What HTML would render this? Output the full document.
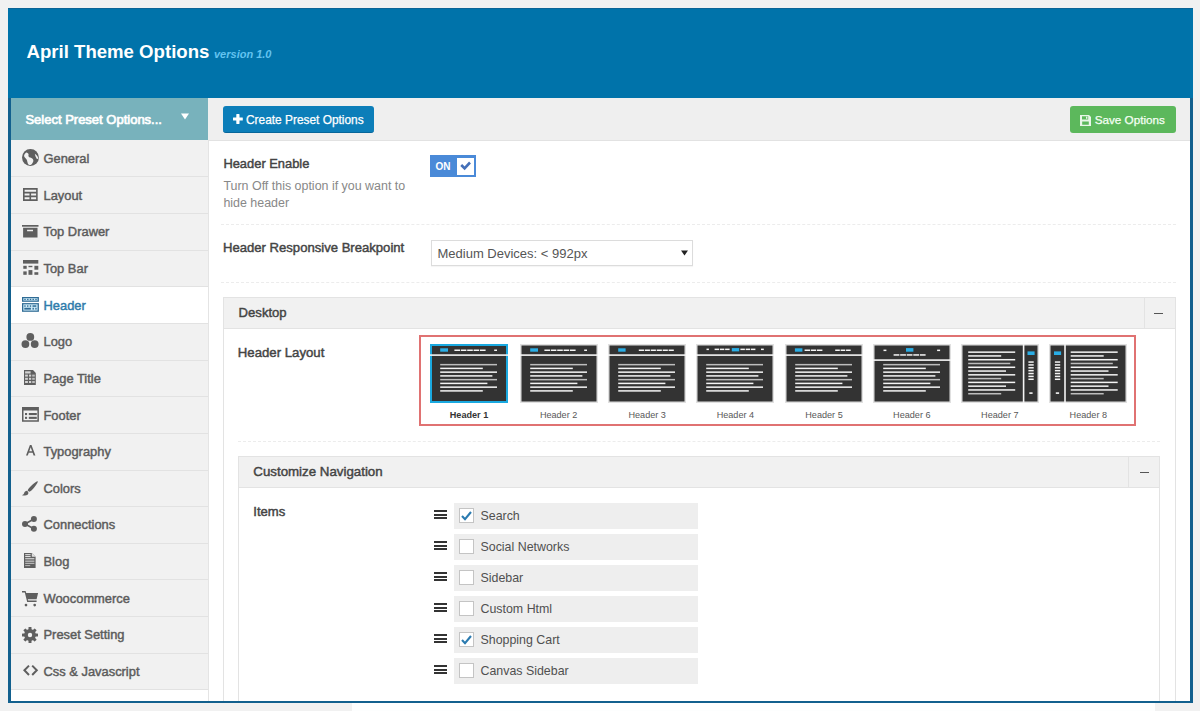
<!DOCTYPE html>
<html><head><meta charset="utf-8"><style>
*{box-sizing:border-box;margin:0;padding:0}
html,body{width:1200px;height:711px;overflow:hidden;background:#f1f1f1;font-family:"Liberation Sans",sans-serif;position:relative}
.t{position:absolute;white-space:nowrap;line-height:1}
.r{position:absolute}
svg{position:absolute;overflow:visible}
</style></head><body>
<div class="r" style="left:8px;top:8px;width:1185px;height:695px;background:#fff;border:3px solid #12608e;border-top:0;border-bottom-width:2px"></div>
<div class="r" style="left:8px;top:8px;width:1185px;height:90px;background:#0073aa;"></div>
<div class="r" style="left:8px;top:7.5px;width:1185px;height:1px;background:#0b6496;"></div>
<div class="r" style="left:352px;top:703px;width:803px;height:8px;background:#fdfefe;"></div>
<div class="t" style="left:26.5px;top:43.06px;font-size:18.6px;font-weight:bold;color:#fff;">April Theme Options</div>
<div class="t" style="left:214px;top:49.09px;font-size:11px;font-weight:bold;color:#63c3f0;font-style:italic">version 1.0</div>
<div class="r" style="left:11px;top:98px;width:197px;height:592px;background:#f1f1f1;"></div>
<div class="r" style="left:11px;top:98px;width:197px;height:41.5px;background:#78b2bc;"></div>
<div class="t" style="left:25.4px;top:113.20px;font-size:13px;font-weight:normal;color:#fff;-webkit-text-stroke:0.7px #fff">Select Preset Options...</div>
<svg style="left:180px;top:113px" width="10" height="7"><path d="M1 0.5 H9 L5 6.5 Z" fill="#fff"/></svg>
<div class="r" style="left:11px;top:176.30px;width:197px;height:1px;background:#e2e2e2;"></div>
<div class="t" style="left:43.5px;top:152.98px;font-size:12.9px;font-weight:normal;color:#5c5c5c;-webkit-text-stroke:0.45px #5c5c5c">General</div>
<svg style="left:21.8px;top:148.8px" width="17" height="17" viewBox="0 0 17 17"><circle cx="8.45" cy="8.45" r="8.45" fill="#5f5f5f"/><path d="M4.2 3.6 C5.4 3.8 6.6 4.6 6.6 5.6 C6.4 6.8 6.2 7.6 7.2 8.2 C8.4 8.6 9.6 8.6 10.6 9.8 C11.6 11 11.6 12.4 10.8 13.6 C10.2 14.6 9.8 15.6 8.6 16 C7.6 16.2 6.4 15.6 5.8 14.4 C5.2 13.2 5.4 11.8 4.6 10.6 C4 9.6 2.6 8.8 2.2 7.6 C1.8 6.2 2.6 4.8 4.2 3.6 Z" fill="#f1f1f1"/><path d="M12.8 4.8 C14.2 5.6 15.6 7.2 16.4 9 C16 9.8 15.6 10.2 15 10 C14.2 9.2 13.4 7.6 12.8 4.8 Z" fill="#f1f1f1"/></svg>
<div class="r" style="left:11px;top:212.95px;width:197px;height:1px;background:#e2e2e2;"></div>
<div class="t" style="left:43.5px;top:189.63px;font-size:12.9px;font-weight:normal;color:#5c5c5c;-webkit-text-stroke:0.45px #5c5c5c">Layout</div>
<svg style="left:22.6px;top:188.1px" width="15" height="13.2" viewBox="0 0 15 13.2"><path d="M0 0H14.7V13.1H0Z M1.6 1.8V3.8H13.1V1.8Z M1.6 5.5V7.5H6.5V5.5Z M8.1 5.5V7.5H13.1V5.5Z M1.6 9.2V11.3H6.5V9.2Z M8.1 9.2V11.3H13.1V9.2Z" fill="#5f5f5f" fill-rule="evenodd"/></svg>
<div class="r" style="left:11px;top:249.60px;width:197px;height:1px;background:#e2e2e2;"></div>
<div class="t" style="left:43.5px;top:226.28px;font-size:12.9px;font-weight:normal;color:#5c5c5c;-webkit-text-stroke:0.45px #5c5c5c">Top Drawer</div>
<svg style="left:21.8px;top:225.2px" width="17" height="13" viewBox="0 0 17 13"><rect x="0" y="0" width="16.5" height="1.7" fill="#5f5f5f"/><path d="M1.1 2.8H15.5V12.4H1.1Z M5.1 4.8V6.2H11V4.8Z" fill="#5f5f5f" fill-rule="evenodd"/></svg>
<div class="r" style="left:11px;top:286.25px;width:197px;height:1px;background:#e2e2e2;"></div>
<div class="t" style="left:43.5px;top:262.93px;font-size:12.9px;font-weight:normal;color:#5c5c5c;-webkit-text-stroke:0.45px #5c5c5c">Top Bar</div>
<svg style="left:22.6px;top:260.2px" width="16" height="15" viewBox="0 0 16 15"><rect x="0" y="0" width="15.3" height="3.6" fill="#5f5f5f"/><rect x="0.3" y="5.8" width="3.4" height="3" fill="#5f5f5f"/><rect x="5.5" y="5.8" width="3.9" height="1.4" fill="#5f5f5f"/><rect x="11.4" y="5.8" width="3.9" height="3.9" fill="#5f5f5f"/><rect x="0.3" y="11.4" width="3.4" height="3.4" fill="#5f5f5f"/><rect x="5.5" y="10.1" width="3.9" height="4.7" fill="#5f5f5f"/><rect x="11.4" y="12.2" width="3.9" height="2.6" fill="#5f5f5f"/></svg>
<div class="r" style="left:11px;top:287.25px;width:197.5px;height:35.65px;background:#fff;"></div>
<div class="r" style="left:11px;top:322.90px;width:197px;height:1px;background:#e2e2e2;"></div>
<div class="t" style="left:43.5px;top:299.58px;font-size:12.9px;font-weight:normal;color:#2f7cab;-webkit-text-stroke:0.45px #2f7cab">Header</div>
<svg style="left:22.4px;top:297px" width="17" height="15" viewBox="0 0 17 15"><rect x="0" y="0" width="16.9" height="4.8" fill="#2f6b95"/><rect x="1.3" y="1.2" width="14.3" height="2.4" fill="#cdeaf7"/><rect x="0" y="6.1" width="16.9" height="8.7" fill="#2f6b95"/><rect x="1.3" y="7.3" width="14.3" height="6.3" fill="#cdeaf7"/><rect x="2.3" y="1.8" width="1.4" height="1.3" fill="#2f6b95"/><rect x="5.1" y="1.8" width="1.4" height="1.3" fill="#2f6b95"/><rect x="7.8" y="1.8" width="1.4" height="1.3" fill="#2f6b95"/><rect x="10.5" y="1.8" width="1.4" height="1.3" fill="#2f6b95"/><rect x="13.3" y="1.8" width="1.4" height="1.3" fill="#2f6b95"/><rect x="2.3" y="8.3" width="1.3" height="1.5" fill="#2f6b95"/><rect x="5.1" y="8.3" width="1.3" height="1.5" fill="#2f6b95"/><rect x="7.8" y="8.3" width="1.3" height="1.5" fill="#2f6b95"/><rect x="10.5" y="8.3" width="3.8" height="1.5" fill="#2f6b95"/><rect x="2.3" y="10.8" width="6.6" height="1.8" fill="#2f6b95"/><rect x="10.5" y="10.8" width="1.4" height="1.8" fill="#2f6b95"/><rect x="13.3" y="10.8" width="1.3" height="1.8" fill="#2f6b95"/></svg>
<div class="r" style="left:11px;top:359.55px;width:197px;height:1px;background:#e2e2e2;"></div>
<div class="t" style="left:43.5px;top:336.23px;font-size:12.9px;font-weight:normal;color:#5c5c5c;-webkit-text-stroke:0.45px #5c5c5c">Logo</div>
<svg style="left:21px;top:333px" width="18" height="16" viewBox="0 0 18 16"><circle cx="9.3" cy="3.9" r="3.9" fill="#5f5f5f"/><circle cx="4.4" cy="11.1" r="3.9" fill="#5f5f5f"/><circle cx="13.7" cy="11.1" r="3.9" fill="#5f5f5f"/></svg>
<div class="r" style="left:11px;top:396.20px;width:197px;height:1px;background:#e2e2e2;"></div>
<div class="t" style="left:43.5px;top:372.88px;font-size:12.9px;font-weight:normal;color:#5c5c5c;-webkit-text-stroke:0.45px #5c5c5c">Page Title</div>
<svg style="left:24.1px;top:370px" width="12" height="15" viewBox="0 0 12 15"><path d="M0 0H9L11.8 3V14.9H0Z" fill="#5f5f5f"/><rect x="1.1" y="1.3" width="5.5" height="2.2" fill="#d4d4d4"/><rect x="1.1" y="4.6" width="2.8" height="2" fill="#d4d4d4"/><rect x="5.0" y="4.6" width="2.2" height="2" fill="#d4d4d4"/><rect x="8.2" y="4.6" width="2.6" height="2" fill="#bdbdbd"/><rect x="1.1" y="7.8" width="2.8" height="2" fill="#d4d4d4"/><rect x="5.0" y="7.8" width="2.2" height="2" fill="#d4d4d4"/><rect x="8.2" y="7.8" width="2.6" height="2" fill="#bdbdbd"/><rect x="1.1" y="11.0" width="2.8" height="2" fill="#d4d4d4"/><rect x="5.0" y="11.0" width="2.2" height="2" fill="#d4d4d4"/><rect x="8.2" y="11.0" width="2.6" height="2" fill="#bdbdbd"/></svg>
<div class="r" style="left:11px;top:432.85px;width:197px;height:1px;background:#e2e2e2;"></div>
<div class="t" style="left:43.5px;top:409.53px;font-size:12.9px;font-weight:normal;color:#5c5c5c;-webkit-text-stroke:0.45px #5c5c5c">Footer</div>
<svg style="left:21.8px;top:406.8px" width="17" height="15" viewBox="0 0 17 15"><path d="M0 0H16.9V14.8H0Z M1.5 3.4V13.3H15.4V3.4Z" fill="#5f5f5f" fill-rule="evenodd"/><rect x="3" y="6" width="2.1" height="2.1" fill="#5f5f5f"/><rect x="6.8" y="6" width="8" height="2.1" fill="#5f5f5f"/><rect x="3" y="9.8" width="2.1" height="2.1" fill="#5f5f5f"/><rect x="6.8" y="9.8" width="8" height="2.1" fill="#5f5f5f"/></svg>
<div class="r" style="left:11px;top:469.50px;width:197px;height:1px;background:#e2e2e2;"></div>
<div class="t" style="left:43.5px;top:446.18px;font-size:12.9px;font-weight:normal;color:#5c5c5c;-webkit-text-stroke:0.45px #5c5c5c">Typography</div>
<svg style="left:25.6px;top:445px" width="10" height="11" viewBox="0 0 10 11"><path d="M0 10.6 L3.9 0 H5.5 L9.4 10.6 H7.6 L6.6 7.8 H2.8 L1.8 10.6 Z M3.3 6.3 H6.1 L4.7 2.3 Z" fill="#5f5f5f" fill-rule="evenodd"/></svg>
<div class="r" style="left:11px;top:506.15px;width:197px;height:1px;background:#e2e2e2;"></div>
<div class="t" style="left:43.5px;top:482.83px;font-size:12.9px;font-weight:normal;color:#5c5c5c;-webkit-text-stroke:0.45px #5c5c5c">Colors</div>
<svg style="left:22.2px;top:480.6px" width="16" height="15" viewBox="0 0 16 15"><path d="M15.7 0.2 C16.2 0.8 14.6 3.4 12.4 6.2 C10.8 8.2 8.6 10.4 7.2 10.8 L5.6 9.4 C6.2 7.8 8.6 5.4 10.6 3.6 C13 1.4 15.2 -0.2 15.7 0.2 Z" fill="#5f5f5f"/><path d="M5 9.8 C3.4 9.8 2.6 10.8 2.2 12 C1.8 13.2 1 13.8 0 14.2 C1.8 14.7 4.4 14.6 5.8 13.4 C6.6 12.6 6.8 11.2 5 9.8 Z" fill="#5f5f5f"/></svg>
<div class="r" style="left:11px;top:542.80px;width:197px;height:1px;background:#e2e2e2;"></div>
<div class="t" style="left:43.5px;top:519.48px;font-size:12.9px;font-weight:normal;color:#5c5c5c;-webkit-text-stroke:0.45px #5c5c5c">Connections</div>
<svg style="left:22.2px;top:515.9px" width="16" height="16" viewBox="0 0 16 16"><circle cx="11.9" cy="3" r="3" fill="#5f5f5f"/><circle cx="3" cy="8.1" r="3" fill="#5f5f5f"/><circle cx="11.9" cy="12.7" r="3" fill="#5f5f5f"/><path d="M3 8.1 L11.9 3 M3 8.1 L11.9 12.7" stroke="#5f5f5f" stroke-width="1.7"/></svg>
<div class="r" style="left:11px;top:579.45px;width:197px;height:1px;background:#e2e2e2;"></div>
<div class="t" style="left:43.5px;top:556.13px;font-size:12.9px;font-weight:normal;color:#5c5c5c;-webkit-text-stroke:0.45px #5c5c5c">Blog</div>
<svg style="left:24.3px;top:553.1px" width="12" height="16" viewBox="0 0 12 16"><path d="M0 0H7.8L11.6 3.8V15.1H0Z" fill="#5f5f5f"/><path d="M7.8 0V3.8H11.6Z" fill="#e0e0e0"/><rect x="1.2" y="1.1" width="5.4" height="1.1" fill="#e0e0e0"/><rect x="1.2" y="3.0" width="5.4" height="1.1" fill="#e0e0e0"/><rect x="1.2" y="5.2" width="9.2" height="1.1" fill="#e0e0e0"/><rect x="1.2" y="7.6" width="9.2" height="1.1" fill="#d0d0d0"/><rect x="1.2" y="9.8" width="9.2" height="1.1" fill="#c0c0c0"/><rect x="1.2" y="12" width="5" height="1.1" fill="#b0b0b0"/></svg>
<div class="r" style="left:11px;top:616.10px;width:197px;height:1px;background:#e2e2e2;"></div>
<div class="t" style="left:43.5px;top:592.78px;font-size:12.9px;font-weight:normal;color:#5c5c5c;-webkit-text-stroke:0.45px #5c5c5c">Woocommerce</div>
<svg style="left:21.8px;top:590.5px" width="17" height="16" viewBox="0 0 17 16"><path d="M0 0 H3.6 L4.2 2.1 H16.1 L14.6 8.2 H5.8 L6.2 9.6 H14.6 V11 H5.2 L2.8 1.4 H0 Z" fill="#5f5f5f"/><circle cx="4" cy="14.1" r="1.35" fill="#5f5f5f"/><circle cx="12.7" cy="14.1" r="1.35" fill="#5f5f5f"/></svg>
<div class="r" style="left:11px;top:652.75px;width:197px;height:1px;background:#e2e2e2;"></div>
<div class="t" style="left:43.5px;top:629.43px;font-size:12.9px;font-weight:normal;color:#5c5c5c;-webkit-text-stroke:0.45px #5c5c5c">Preset Setting</div>
<svg style="left:21.8px;top:626.5px" width="16" height="16" viewBox="-8 -8 16 16"><g fill="#5f5f5f"><rect x="-1.5" y="-8" width="3" height="4" rx="0.5" transform="rotate(0)"/><rect x="-1.5" y="-8" width="3" height="4" rx="0.5" transform="rotate(45)"/><rect x="-1.5" y="-8" width="3" height="4" rx="0.5" transform="rotate(90)"/><rect x="-1.5" y="-8" width="3" height="4" rx="0.5" transform="rotate(135)"/><rect x="-1.5" y="-8" width="3" height="4" rx="0.5" transform="rotate(180)"/><rect x="-1.5" y="-8" width="3" height="4" rx="0.5" transform="rotate(225)"/><rect x="-1.5" y="-8" width="3" height="4" rx="0.5" transform="rotate(270)"/><rect x="-1.5" y="-8" width="3" height="4" rx="0.5" transform="rotate(315)"/><circle r="5.9"/></g><circle r="2.2" fill="#f1f1f1"/></svg>
<div class="r" style="left:11px;top:689.40px;width:197px;height:1px;background:#e2e2e2;"></div>
<div class="t" style="left:43.5px;top:666.08px;font-size:12.9px;font-weight:normal;color:#5c5c5c;-webkit-text-stroke:0.45px #5c5c5c">Css &amp; Javascript</div>
<svg style="left:22.5px;top:665px" width="16" height="11" viewBox="0 0 16 11"><path d="M6 0.6 L1.4 5.3 L6 10 M9.2 0.6 L13.8 5.3 L9.2 10" stroke="#5f5f5f" stroke-width="2" fill="none" stroke-linejoin="miter"/></svg>
<div class="r" style="left:207.5px;top:139.5px;width:1px;height:561.5px;background:#e4e4e4;"></div>
<div class="r" style="left:208px;top:98px;width:982px;height:42.5px;background:#efefef;border-bottom:1px solid #e2e2e2"></div>
<div class="r" style="left:223px;top:106px;width:151px;height:26.7px;background:#0c7eb9;border-radius:3px;border-bottom:1px solid #07669a"></div>
<svg style="left:233px;top:114.3px" width="10" height="10" viewBox="0 0 10 10"><path d="M3.3 0.4Q3.3 0 3.7 0H6.1Q6.5 0 6.5 0.4V3.4H9.4Q9.8 3.4 9.8 3.8V6.2Q9.8 6.6 9.4 6.6H6.5V9.6Q6.5 10 6.1 10H3.7Q3.3 10 3.3 9.6V6.6H0.4Q0 6.6 0 6.2V3.8Q0 3.4 0.4 3.4H3.3Z" fill="#fff"/></svg>
<div class="t" style="left:246px;top:114.83px;font-size:11.9px;font-weight:normal;color:#fff;-webkit-text-stroke:0.25px #fff">Create Preset Options</div>
<div class="r" style="left:1070px;top:106px;width:106px;height:26.5px;background:#5cb85c;border-radius:3px"></div>
<svg style="left:1080px;top:114.5px" width="11" height="11" viewBox="0 0 11 11"><path d="M0 0H9L11 2V11H0Z M2 1.2V4.4H8.2V1.2Z M2.2 6.4V9.8H8.8V6.4Z" fill="#e8f6e8" fill-rule="evenodd"/><rect x="6" y="1.6" width="1.4" height="2.2" fill="#e8f6e8"/></svg>
<div class="t" style="left:1094.7px;top:114.40px;font-size:11.7px;font-weight:normal;color:#f4fff4;-webkit-text-stroke:0.25px #f4fff4">Save Options</div>
<div class="t" style="left:223.4px;top:157.78px;font-size:12.9px;font-weight:normal;color:#444;-webkit-text-stroke:0.45px #444">Header Enable</div>
<div class="t" style="left:223.4px;top:179.76px;font-size:12.45px;font-weight:normal;color:#888;">Turn Off this option if you want to</div>
<div class="t" style="left:223.4px;top:196.66px;font-size:12.45px;font-weight:normal;color:#888;">hide header</div>
<div class="r" style="left:430px;top:155px;width:46px;height:22px;background:#4a8ad8;"></div>
<div class="r" style="left:456.5px;top:158px;width:17px;height:16.5px;background:#fff;"></div>
<div class="t" style="left:435.5px;top:161.53px;font-size:10px;font-weight:bold;color:#fff;">ON</div>
<svg style="left:459px;top:161px" width="12" height="10" viewBox="0 0 12 10"><path d="M2.2 4 L5.6 7.3 L11 1.5" stroke="#4570b8" stroke-width="2.6" fill="none"/></svg>
<div class="r" style="left:221px;top:224px;width:955px;height:1px;background:transparent;border-top:1px dashed #ececec"></div>
<div class="t" style="left:223px;top:241.01px;font-size:13.1px;font-weight:normal;color:#444;-webkit-text-stroke:0.45px #444">Header Responsive Breakpoint</div>
<div class="r" style="left:430.5px;top:240.3px;width:262.5px;height:26px;background:#fff;border:1px solid #dcdcdc;box-shadow:0 1px 1px rgba(0,0,0,.04)"></div>
<div class="t" style="left:437.5px;top:247.20px;font-size:13px;font-weight:normal;color:#555;">Medium Devices: &lt; 992px</div>
<svg style="left:681px;top:250px" width="7" height="6" viewBox="0 0 7 6"><path d="M0 0.5H7L3.5 5.5Z" fill="#222"/></svg>
<div class="r" style="left:221px;top:281.5px;width:955px;height:1px;background:transparent;border-top:1px dashed #ececec"></div>
<div class="r" style="left:223px;top:297px;width:953px;height:404px;background:#fff;border:1px solid #e3e3e3;border-bottom:0"></div>
<div class="r" style="left:223px;top:297px;width:953px;height:31.5px;background:#f1f1f1;border:1px solid #e3e3e3"></div>
<div class="r" style="left:1143.5px;top:297px;width:1px;height:31.5px;background:#e3e3e3;"></div>
<div class="r" style="left:1154px;top:312.5px;width:9px;height:1.6px;background:#555;"></div>
<div class="t" style="left:238.6px;top:306.31px;font-size:13.1px;font-weight:normal;color:#444;-webkit-text-stroke:0.45px #444">Desktop</div>
<div class="t" style="left:237.8px;top:346.23px;font-size:13.2px;font-weight:normal;color:#444;-webkit-text-stroke:0.45px #444">Header Layout</div>
<div class="r" style="left:419.2px;top:334.6px;width:716.8px;height:91.2px;background:transparent;border:2px solid #e07272"></div>
<svg style="left:430.0px;top:344.3px" width="78" height="59" viewBox="0 0 78 59"><rect x="0" y="0" width="78" height="59" fill="#1aa9e0"/><rect x="2" y="2" width="74" height="55" fill="#333"/><rect x="0" y="10.3" width="78" height="1.6" fill="#f4f4f4"/><rect x="10.2" y="19.90" width="56.80" height="1.5" fill="#bdbdbd"/><rect x="10.2" y="23.65" width="42.60" height="1.5" fill="#f4f4f4"/><rect x="10.2" y="27.40" width="56.80" height="1.5" fill="#f4f4f4"/><rect x="10.2" y="31.15" width="52.20" height="1.5" fill="#f4f4f4"/><rect x="10.2" y="34.90" width="56.80" height="1.5" fill="#bdbdbd"/><rect x="10.2" y="38.65" width="47.20" height="1.5" fill="#f4f4f4"/><rect x="10.2" y="42.40" width="56.80" height="1.5" fill="#f4f4f4"/><rect x="10.2" y="46.15" width="42.60" height="1.5" fill="#f4f4f4"/><rect x="10.2" y="4.3" width="7.8" height="3.4" fill="#2aaee6"/><rect x="24.40" y="5.5" width="5.60" height="1.5" fill="#f4f4f4"/><rect x="30.80" y="5.5" width="5.60" height="1.5" fill="#f4f4f4"/><rect x="37.20" y="5.5" width="5.60" height="1.5" fill="#f4f4f4"/><rect x="43.60" y="5.5" width="5.60" height="1.5" fill="#f4f4f4"/><rect x="50.00" y="5.5" width="5.60" height="1.5" fill="#f4f4f4"/><rect x="64.2" y="5.5" width="2.8" height="1.5" fill="#f4f4f4"/></svg>
<div class="t" style="left:429px;width:80px;text-align:center;top:411.10px;font-size:9.1px;font-weight:bold;color:#333">Header 1</div>
<svg style="left:519.6px;top:344.3px" width="78" height="59" viewBox="0 0 78 59"><rect x="0" y="0" width="78" height="59" fill="#e0e0e0"/><rect x="1.5" y="1.5" width="75" height="56" fill="#333"/><rect x="0" y="10.3" width="78" height="1.6" fill="#f4f4f4"/><rect x="10.2" y="19.90" width="56.80" height="1.5" fill="#bdbdbd"/><rect x="10.2" y="23.65" width="42.60" height="1.5" fill="#f4f4f4"/><rect x="10.2" y="27.40" width="56.80" height="1.5" fill="#f4f4f4"/><rect x="10.2" y="31.15" width="52.20" height="1.5" fill="#f4f4f4"/><rect x="10.2" y="34.90" width="56.80" height="1.5" fill="#bdbdbd"/><rect x="10.2" y="38.65" width="47.20" height="1.5" fill="#f4f4f4"/><rect x="10.2" y="42.40" width="56.80" height="1.5" fill="#f4f4f4"/><rect x="10.2" y="46.15" width="42.60" height="1.5" fill="#f4f4f4"/><rect x="10.2" y="4.3" width="7.8" height="3.4" fill="#2aaee6"/><rect x="24.40" y="5.5" width="5.60" height="1.5" fill="#f4f4f4"/><rect x="30.80" y="5.5" width="5.60" height="1.5" fill="#f4f4f4"/><rect x="37.20" y="5.5" width="5.60" height="1.5" fill="#f4f4f4"/><rect x="43.60" y="5.5" width="5.60" height="1.5" fill="#f4f4f4"/><rect x="50.00" y="5.5" width="5.60" height="1.5" fill="#f4f4f4"/><rect x="64.2" y="5.5" width="2.8" height="1.5" fill="#f4f4f4"/></svg>
<div class="t" style="left:518.6px;width:80px;text-align:center;top:411.18px;font-size:9.1px;color:#585858">Header 2</div>
<svg style="left:608.2px;top:344.3px" width="78" height="59" viewBox="0 0 78 59"><rect x="0" y="0" width="78" height="59" fill="#e0e0e0"/><rect x="1.5" y="1.5" width="75" height="56" fill="#333"/><rect x="0" y="10.3" width="78" height="1.6" fill="#f4f4f4"/><rect x="10.2" y="19.90" width="56.80" height="1.5" fill="#bdbdbd"/><rect x="10.2" y="23.65" width="42.60" height="1.5" fill="#f4f4f4"/><rect x="10.2" y="27.40" width="56.80" height="1.5" fill="#f4f4f4"/><rect x="10.2" y="31.15" width="52.20" height="1.5" fill="#f4f4f4"/><rect x="10.2" y="34.90" width="56.80" height="1.5" fill="#bdbdbd"/><rect x="10.2" y="38.65" width="47.20" height="1.5" fill="#f4f4f4"/><rect x="10.2" y="42.40" width="56.80" height="1.5" fill="#f4f4f4"/><rect x="10.2" y="46.15" width="42.60" height="1.5" fill="#f4f4f4"/><rect x="10.2" y="4.3" width="7.4" height="3.4" fill="#2aaee6"/><rect x="30.80" y="5.5" width="5.17" height="1.5" fill="#f4f4f4"/><rect x="36.77" y="5.5" width="5.17" height="1.5" fill="#f4f4f4"/><rect x="42.73" y="5.5" width="5.17" height="1.5" fill="#f4f4f4"/><rect x="48.70" y="5.5" width="5.17" height="1.5" fill="#f4f4f4"/><rect x="54.67" y="5.5" width="5.17" height="1.5" fill="#f4f4f4"/><rect x="60.63" y="5.5" width="5.17" height="1.5" fill="#f4f4f4"/></svg>
<div class="t" style="left:607.2px;width:80px;text-align:center;top:411.18px;font-size:9.1px;color:#585858">Header 3</div>
<svg style="left:696.4px;top:344.3px" width="78" height="59" viewBox="0 0 78 59"><rect x="0" y="0" width="78" height="59" fill="#e0e0e0"/><rect x="1.5" y="1.5" width="75" height="56" fill="#333"/><rect x="0" y="10.3" width="78" height="1.6" fill="#f4f4f4"/><rect x="10.2" y="19.90" width="56.80" height="1.5" fill="#bdbdbd"/><rect x="10.2" y="23.65" width="42.60" height="1.5" fill="#f4f4f4"/><rect x="10.2" y="27.40" width="56.80" height="1.5" fill="#f4f4f4"/><rect x="10.2" y="31.15" width="52.20" height="1.5" fill="#f4f4f4"/><rect x="10.2" y="34.90" width="56.80" height="1.5" fill="#bdbdbd"/><rect x="10.2" y="38.65" width="47.20" height="1.5" fill="#f4f4f4"/><rect x="10.2" y="42.40" width="56.80" height="1.5" fill="#f4f4f4"/><rect x="10.2" y="46.15" width="42.60" height="1.5" fill="#f4f4f4"/><rect x="10.5" y="4.6" width="2.4" height="1.5" fill="#f4f4f4"/><rect x="18.60" y="4.6" width="4.47" height="1.5" fill="#f4f4f4"/><rect x="23.87" y="4.6" width="4.47" height="1.5" fill="#f4f4f4"/><rect x="29.13" y="4.6" width="4.47" height="1.5" fill="#f4f4f4"/><rect x="35.8" y="4.1" width="7.4" height="3.3" fill="#2aaee6"/><rect x="44.40" y="4.6" width="4.47" height="1.5" fill="#f4f4f4"/><rect x="49.67" y="4.6" width="4.47" height="1.5" fill="#f4f4f4"/><rect x="54.93" y="4.6" width="4.47" height="1.5" fill="#f4f4f4"/><rect x="65" y="4.6" width="2.8" height="1.5" fill="#f4f4f4"/></svg>
<div class="t" style="left:695.4px;width:80px;text-align:center;top:411.18px;font-size:9.1px;color:#585858">Header 4</div>
<svg style="left:785.0px;top:344.3px" width="78" height="59" viewBox="0 0 78 59"><rect x="0" y="0" width="78" height="59" fill="#e0e0e0"/><rect x="1.5" y="1.5" width="75" height="56" fill="#333"/><rect x="0" y="10.3" width="78" height="1.6" fill="#f4f4f4"/><rect x="10.2" y="19.90" width="56.80" height="1.5" fill="#bdbdbd"/><rect x="10.2" y="23.65" width="42.60" height="1.5" fill="#f4f4f4"/><rect x="10.2" y="27.40" width="56.80" height="1.5" fill="#f4f4f4"/><rect x="10.2" y="31.15" width="52.20" height="1.5" fill="#f4f4f4"/><rect x="10.2" y="34.90" width="56.80" height="1.5" fill="#bdbdbd"/><rect x="10.2" y="38.65" width="47.20" height="1.5" fill="#f4f4f4"/><rect x="10.2" y="42.40" width="56.80" height="1.5" fill="#f4f4f4"/><rect x="10.2" y="46.15" width="42.60" height="1.5" fill="#f4f4f4"/><rect x="9.9" y="4.3" width="7.5" height="3.4" fill="#2aaee6"/><rect x="19.60" y="5.5" width="5.40" height="1.5" fill="#f4f4f4"/><rect x="25.80" y="5.5" width="5.40" height="1.5" fill="#f4f4f4"/><rect x="32.00" y="5.5" width="5.40" height="1.5" fill="#f4f4f4"/><rect x="50.20" y="5.5" width="4.63" height="1.5" fill="#f4f4f4"/><rect x="55.63" y="5.5" width="4.63" height="1.5" fill="#f4f4f4"/><rect x="61.07" y="5.5" width="4.63" height="1.5" fill="#f4f4f4"/></svg>
<div class="t" style="left:784px;width:80px;text-align:center;top:411.18px;font-size:9.1px;color:#585858">Header 5</div>
<svg style="left:872.8px;top:344.3px" width="78" height="59" viewBox="0 0 78 59"><rect x="0" y="0" width="78" height="59" fill="#e0e0e0"/><rect x="1.5" y="1.5" width="75" height="56" fill="#333"/><rect x="0" y="15.3" width="78" height="1.6" fill="#f4f4f4"/><rect x="10.2" y="19.90" width="56.80" height="1.5" fill="#bdbdbd"/><rect x="10.2" y="23.65" width="42.60" height="1.5" fill="#f4f4f4"/><rect x="10.2" y="27.40" width="56.80" height="1.5" fill="#f4f4f4"/><rect x="10.2" y="31.15" width="52.20" height="1.5" fill="#f4f4f4"/><rect x="10.2" y="34.90" width="56.80" height="1.5" fill="#bdbdbd"/><rect x="10.2" y="38.65" width="47.20" height="1.5" fill="#f4f4f4"/><rect x="10.2" y="42.40" width="56.80" height="1.5" fill="#f4f4f4"/><rect x="10.2" y="46.15" width="42.60" height="1.5" fill="#f4f4f4"/><rect x="10.5" y="5.6" width="2.9" height="1.5" fill="#f4f4f4"/><rect x="33" y="4.1" width="7.4" height="3.6" fill="#2aaee6"/><rect x="64.1" y="5.6" width="3" height="1.5" fill="#f4f4f4"/><rect x="20.60" y="10.2" width="5.76" height="1.5" fill="#f4f4f4"/><rect x="27.16" y="10.2" width="5.76" height="1.5" fill="#f4f4f4"/><rect x="33.72" y="10.2" width="5.76" height="1.5" fill="#f4f4f4"/><rect x="40.28" y="10.2" width="5.76" height="1.5" fill="#f4f4f4"/><rect x="46.84" y="10.2" width="5.76" height="1.5" fill="#f4f4f4"/></svg>
<div class="t" style="left:871.8px;width:80px;text-align:center;top:411.18px;font-size:9.1px;color:#585858">Header 6</div>
<svg style="left:960.8px;top:344.3px" width="78" height="59" viewBox="0 0 78 59"><rect x="0" y="0" width="78" height="59" fill="#e0e0e0"/><rect x="1.5" y="1.5" width="75" height="56" fill="#333"/><rect x="61.800000000000004" y="0" width="1.6" height="59" fill="#f4f4f4"/><rect x="7.2" y="7.40" width="47.00" height="1.5" fill="#f4f4f4"/><rect x="7.2" y="11.18" width="33.00" height="1.5" fill="#f4f4f4"/><rect x="7.2" y="14.96" width="47.00" height="1.5" fill="#f4f4f4"/><rect x="7.2" y="18.74" width="42.10" height="1.5" fill="#bdbdbd"/><rect x="7.2" y="22.52" width="47.00" height="1.5" fill="#f4f4f4"/><rect x="7.2" y="26.30" width="37.80" height="1.5" fill="#f4f4f4"/><rect x="7.2" y="30.08" width="47.00" height="1.5" fill="#f4f4f4"/><rect x="7.2" y="33.86" width="33.00" height="1.5" fill="#bdbdbd"/><rect x="7.2" y="37.64" width="47.00" height="1.5" fill="#f4f4f4"/><rect x="7.2" y="41.42" width="37.80" height="1.5" fill="#f4f4f4"/><rect x="7.2" y="45.20" width="47.00" height="1.5" fill="#f4f4f4"/><rect x="7.2" y="48.98" width="33.00" height="1.5" fill="#bdbdbd"/><rect x="66.5" y="7.4" width="7.1" height="3.6" fill="#2aaee6"/><rect x="67.4" y="17.30" width="5.3" height="1.5" fill="#f4f4f4"/><rect x="67.4" y="20.17" width="5.3" height="1.5" fill="#f4f4f4"/><rect x="67.4" y="23.04" width="5.3" height="1.5" fill="#f4f4f4"/><rect x="67.4" y="25.91" width="5.3" height="1.5" fill="#f4f4f4"/><rect x="67.4" y="28.78" width="5.3" height="1.5" fill="#f4f4f4"/><rect x="67.4" y="31.65" width="5.3" height="1.5" fill="#f4f4f4"/><rect x="67.4" y="34.52" width="5.3" height="1.5" fill="#f4f4f4"/><rect x="68.3" y="48.3" width="3.3" height="1.6" fill="#f4f4f4"/></svg>
<div class="t" style="left:959.8px;width:80px;text-align:center;top:411.18px;font-size:9.1px;color:#585858">Header 7</div>
<svg style="left:1049.3px;top:344.3px" width="78" height="59" viewBox="0 0 78 59"><rect x="0" y="0" width="78" height="59" fill="#e0e0e0"/><rect x="1.5" y="1.5" width="75" height="56" fill="#333"/><rect x="15.2" y="0" width="1.6" height="59" fill="#f4f4f4"/><rect x="21.7" y="7.40" width="47.00" height="1.5" fill="#f4f4f4"/><rect x="21.7" y="11.18" width="33.00" height="1.5" fill="#f4f4f4"/><rect x="21.7" y="14.96" width="47.00" height="1.5" fill="#f4f4f4"/><rect x="21.7" y="18.74" width="42.10" height="1.5" fill="#bdbdbd"/><rect x="21.7" y="22.52" width="47.00" height="1.5" fill="#f4f4f4"/><rect x="21.7" y="26.30" width="37.80" height="1.5" fill="#f4f4f4"/><rect x="21.7" y="30.08" width="47.00" height="1.5" fill="#f4f4f4"/><rect x="21.7" y="33.86" width="33.00" height="1.5" fill="#bdbdbd"/><rect x="21.7" y="37.64" width="47.00" height="1.5" fill="#f4f4f4"/><rect x="21.7" y="41.42" width="37.80" height="1.5" fill="#f4f4f4"/><rect x="21.7" y="45.20" width="47.00" height="1.5" fill="#f4f4f4"/><rect x="21.7" y="48.98" width="33.00" height="1.5" fill="#bdbdbd"/><rect x="5" y="7.4" width="7.1" height="3.6" fill="#2aaee6"/><rect x="5.9" y="17.30" width="5.3" height="1.5" fill="#f4f4f4"/><rect x="5.9" y="20.17" width="5.3" height="1.5" fill="#f4f4f4"/><rect x="5.9" y="23.04" width="5.3" height="1.5" fill="#f4f4f4"/><rect x="5.9" y="25.91" width="5.3" height="1.5" fill="#f4f4f4"/><rect x="5.9" y="28.78" width="5.3" height="1.5" fill="#f4f4f4"/><rect x="5.9" y="31.65" width="5.3" height="1.5" fill="#f4f4f4"/><rect x="5.9" y="34.52" width="5.3" height="1.5" fill="#f4f4f4"/><rect x="6.8" y="48.3" width="3.3" height="1.6" fill="#f4f4f4"/></svg>
<div class="t" style="left:1048.3px;width:80px;text-align:center;top:411.18px;font-size:9.1px;color:#585858">Header 8</div>
<div class="r" style="left:238px;top:440.5px;width:922px;height:1px;background:transparent;border-top:1px dashed #ececec"></div>
<div class="r" style="left:238px;top:456px;width:922px;height:245px;background:#fff;border:1px solid #e3e3e3;border-bottom:0"></div>
<div class="r" style="left:238px;top:456px;width:922px;height:31.5px;background:#f1f1f1;border:1px solid #e3e3e3"></div>
<div class="r" style="left:1128px;top:456px;width:1px;height:31.5px;background:#e3e3e3;"></div>
<div class="r" style="left:1139.5px;top:471.5px;width:9px;height:1.6px;background:#555;"></div>
<div class="t" style="left:253.3px;top:464.54px;font-size:13.3px;font-weight:normal;color:#444;-webkit-text-stroke:0.45px #444">Customize Navigation</div>
<div class="t" style="left:253.3px;top:504.81px;font-size:13.1px;font-weight:normal;color:#444;-webkit-text-stroke:0.45px #444">Items</div>
<div class="r" style="left:454px;top:503px;width:244px;height:25.7px;background:#eeeeee;"></div>
<div class="r" style="left:434.2px;top:510.2px;width:13.2px;height:1.8px;background:#333;"></div>
<div class="r" style="left:434.2px;top:513.8px;width:13.2px;height:1.8px;background:#333;"></div>
<div class="r" style="left:434.2px;top:517.3px;width:13.2px;height:1.8px;background:#333;"></div>
<div class="r" style="left:458.7px;top:508px;width:15.2px;height:15px;background:#fff;border:1px solid #c4c4c4"></div>
<svg style="left:460px;top:510px" width="13" height="12" viewBox="0 0 13 12"><path d="M2 6 L5 9.2 L11 2" stroke="#2b7bb0" stroke-width="2.1" fill="none"/></svg>
<div class="t" style="left:480.5px;top:510.30px;font-size:12.4px;font-weight:normal;color:#505050;">Search</div>
<div class="r" style="left:454px;top:534px;width:244px;height:25.7px;background:#eeeeee;"></div>
<div class="r" style="left:434.2px;top:541.2px;width:13.2px;height:1.8px;background:#333;"></div>
<div class="r" style="left:434.2px;top:544.8px;width:13.2px;height:1.8px;background:#333;"></div>
<div class="r" style="left:434.2px;top:548.3px;width:13.2px;height:1.8px;background:#333;"></div>
<div class="r" style="left:458.7px;top:539px;width:15.2px;height:15px;background:#fff;border:1px solid #c4c4c4"></div>
<div class="t" style="left:480.5px;top:541.30px;font-size:12.4px;font-weight:normal;color:#505050;">Social Networks</div>
<div class="r" style="left:454px;top:565px;width:244px;height:25.7px;background:#eeeeee;"></div>
<div class="r" style="left:434.2px;top:572.2px;width:13.2px;height:1.8px;background:#333;"></div>
<div class="r" style="left:434.2px;top:575.8px;width:13.2px;height:1.8px;background:#333;"></div>
<div class="r" style="left:434.2px;top:579.3px;width:13.2px;height:1.8px;background:#333;"></div>
<div class="r" style="left:458.7px;top:570px;width:15.2px;height:15px;background:#fff;border:1px solid #c4c4c4"></div>
<div class="t" style="left:480.5px;top:572.30px;font-size:12.4px;font-weight:normal;color:#505050;">Sidebar</div>
<div class="r" style="left:454px;top:596px;width:244px;height:25.7px;background:#eeeeee;"></div>
<div class="r" style="left:434.2px;top:603.2px;width:13.2px;height:1.8px;background:#333;"></div>
<div class="r" style="left:434.2px;top:606.8px;width:13.2px;height:1.8px;background:#333;"></div>
<div class="r" style="left:434.2px;top:610.3px;width:13.2px;height:1.8px;background:#333;"></div>
<div class="r" style="left:458.7px;top:601px;width:15.2px;height:15px;background:#fff;border:1px solid #c4c4c4"></div>
<div class="t" style="left:480.5px;top:603.30px;font-size:12.4px;font-weight:normal;color:#505050;">Custom Html</div>
<div class="r" style="left:454px;top:627px;width:244px;height:25.7px;background:#eeeeee;"></div>
<div class="r" style="left:434.2px;top:634.2px;width:13.2px;height:1.8px;background:#333;"></div>
<div class="r" style="left:434.2px;top:637.8px;width:13.2px;height:1.8px;background:#333;"></div>
<div class="r" style="left:434.2px;top:641.3px;width:13.2px;height:1.8px;background:#333;"></div>
<div class="r" style="left:458.7px;top:632px;width:15.2px;height:15px;background:#fff;border:1px solid #c4c4c4"></div>
<svg style="left:460px;top:634px" width="13" height="12" viewBox="0 0 13 12"><path d="M2 6 L5 9.2 L11 2" stroke="#2b7bb0" stroke-width="2.1" fill="none"/></svg>
<div class="t" style="left:480.5px;top:634.30px;font-size:12.4px;font-weight:normal;color:#505050;">Shopping Cart</div>
<div class="r" style="left:454px;top:658px;width:244px;height:25.7px;background:#eeeeee;"></div>
<div class="r" style="left:434.2px;top:665.2px;width:13.2px;height:1.8px;background:#333;"></div>
<div class="r" style="left:434.2px;top:668.8px;width:13.2px;height:1.8px;background:#333;"></div>
<div class="r" style="left:434.2px;top:672.3px;width:13.2px;height:1.8px;background:#333;"></div>
<div class="r" style="left:458.7px;top:663px;width:15.2px;height:15px;background:#fff;border:1px solid #c4c4c4"></div>
<div class="t" style="left:480.5px;top:665.30px;font-size:12.4px;font-weight:normal;color:#505050;">Canvas Sidebar</div>
</body></html>
